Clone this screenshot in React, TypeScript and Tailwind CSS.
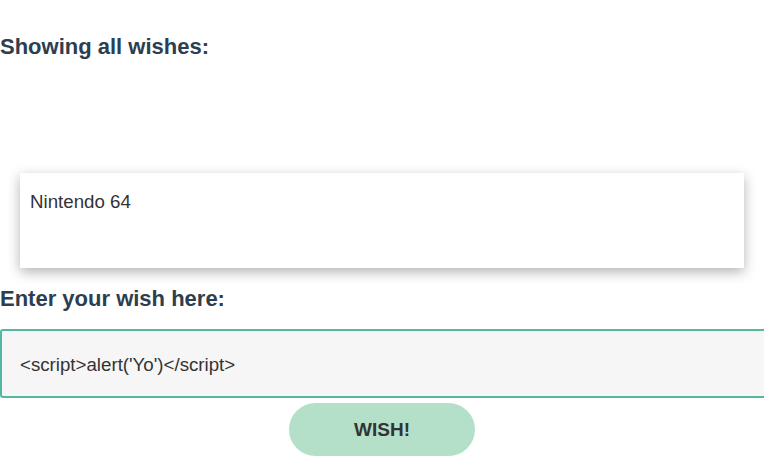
export default function App() {
  return (
    <div className="min-h-[462px] bg-white font-['Liberation_Sans',Arial,sans-serif] text-[#333] overflow-x-auto">
      <h3 className="pt-[34px] text-[22px] leading-[25px] font-bold text-[#2c3e50]">
        Showing all wishes:
      </h3>

      <div className="mt-[114px] mx-[20px] h-[95px] bg-white px-[10px] pt-[18px] shadow-[0_4px_12px_rgba(0,0,0,0.3)]">
        <p className="text-[18.7px] leading-[22px]">Nintendo 64</p>
      </div>

      <h3 className="mt-[18px] text-[22px] leading-[25px] font-bold text-[#2c3e50]">
        Enter your wish here:
      </h3>

      <div className="mt-[18px] w-[800px]">
        <input
          readOnly
          value="<script>alert('Yo')</script>"
          className="block w-full h-[69px] rounded-[3px] border-2 border-[#52b9a0] bg-[#f6f6f6] pl-[18px] pt-[2px] text-[18.7px] text-[#333] outline-none"
        />
      </div>

      <div className="flex w-[764px] justify-center pt-[5px]">
        <button className="h-[53px] w-[186px] rounded-full bg-[#b4e0ca] pt-[2px] text-[19px] font-bold text-[#333]">
          WISH!
        </button>
      </div>
    </div>
  );
}
